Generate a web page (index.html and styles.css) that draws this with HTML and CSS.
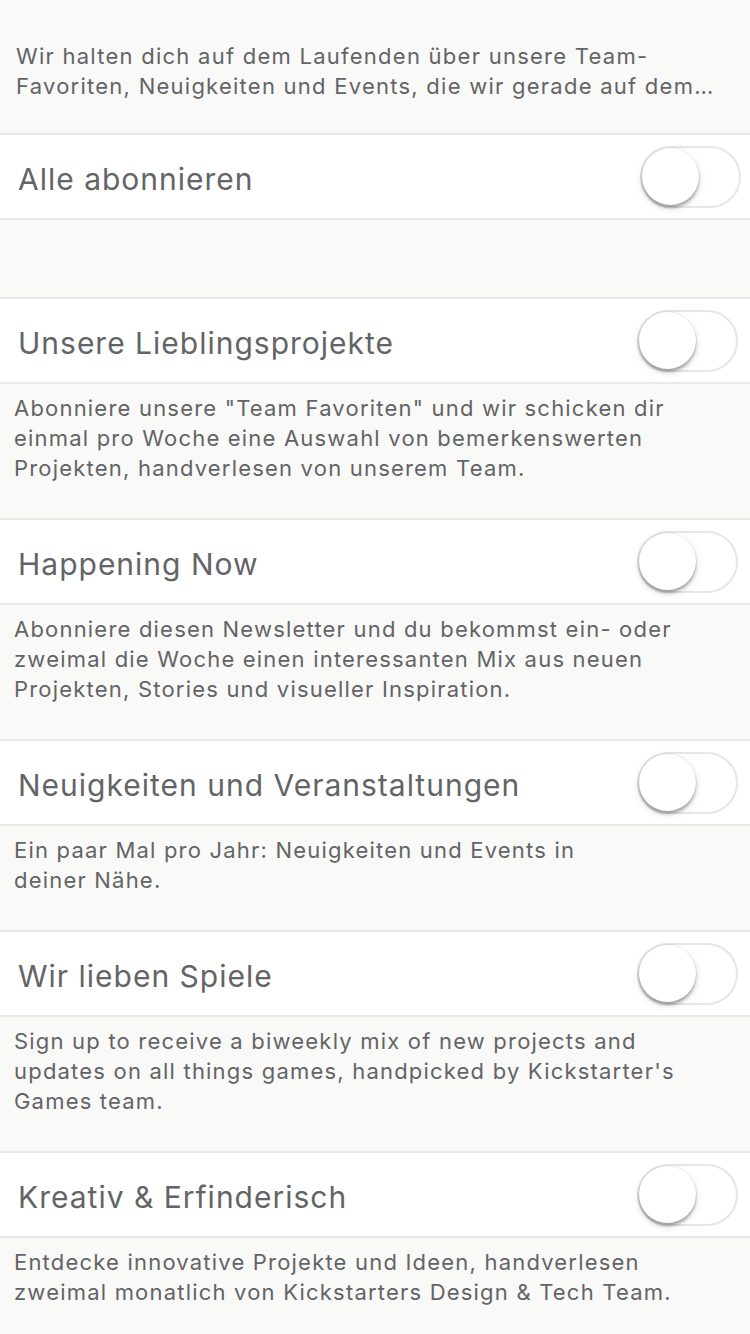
FILE: index.html
```html
<!DOCTYPE html>
<html lang="de">
<head>
<meta charset="utf-8">
<link rel="stylesheet" href="styles.css">
</head>
<body>
<div class="page">
  <p class="intro">Wir halten dich auf dem Laufenden über unsere Team-<br>Favoriten, Neuigkeiten und Events, die wir gerade auf dem…</p>

  <div class="row row--all">
    <span class="row-title">Alle abonnieren</span>
    <span class="toggle"><span class="knob"></span></span>
  </div>

  <div class="spacer"></div>

  <section class="group">
    <div class="row">
      <span class="row-title">Unsere Lieblingsprojekte</span>
      <span class="toggle"><span class="knob"></span></span>
    </div>
    <p class="desc">Abonniere unsere "Team Favoriten" und wir schicken dir<br>einmal pro Woche eine Auswahl von bemerkenswerten<br>Projekten, handverlesen von unserem Team.</p>
  </section>

  <section class="group">
    <div class="row">
      <span class="row-title">Happening Now</span>
      <span class="toggle"><span class="knob"></span></span>
    </div>
    <p class="desc">Abonniere diesen Newsletter und du bekommst ein- oder<br>zweimal die Woche einen interessanten Mix aus neuen<br>Projekten, Stories und visueller Inspiration.</p>
  </section>

  <section class="group">
    <div class="row">
      <span class="row-title">Neuigkeiten und Veranstaltungen</span>
      <span class="toggle"><span class="knob"></span></span>
    </div>
    <p class="desc">Ein paar Mal pro Jahr: Neuigkeiten und Events in<br>deiner Nähe.</p>
  </section>

  <section class="group">
    <div class="row">
      <span class="row-title">Wir lieben Spiele</span>
      <span class="toggle"><span class="knob"></span></span>
    </div>
    <p class="desc">Sign up to receive a biweekly mix of new projects and<br>updates on all things games, handpicked by Kickstarter's<br>Games team.</p>
  </section>

  <section class="group">
    <div class="row">
      <span class="row-title">Kreativ &amp; Erfinderisch</span>
      <span class="toggle"><span class="knob"></span></span>
    </div>
    <p class="desc">Entdecke innovative Projekte und Ideen, handverlesen<br>zweimal monatlich von Kickstarters Design &amp; Tech Team.</p>
  </section>
</div>
</body>
</html>
```

FILE: styles.css
```css
* { box-sizing: border-box; }
html, body {
  margin: 0;
  padding: 0;
  background: #f9f9f8;
}
body {
  font-family: Inter, Roboto, "Liberation Sans", sans-serif;
  color: #636466;
  width: 750px;
  height: 1334px;
  overflow: hidden;
}
.page {
  display: flex;
  flex-direction: column;
}
.intro {
  margin: 0;
  padding: 41px 16px 32px;
  font-size: 22px;
  line-height: 30px;
  letter-spacing: 1.25px;
  white-space: nowrap;
}
.row {
  display: flex;
  align-items: center;
  justify-content: space-between;
  height: 87px;
  background: #fff;
  border-top: 2px solid #e9e9e9;
  border-bottom: 2px solid #e9e9e9;
  padding: 0 12px 0 18px;
}
.row--all { padding-right: 9px; }
.row-title {
  font-size: 30px;
  line-height: 36px;
  letter-spacing: 1px;
  padding-top: 4px;
}
.spacer { height: 77px; }
.desc {
  margin: 0;
  padding: 9px 14px 35px;
  font-size: 22px;
  line-height: 30px;
  letter-spacing: 1.2px;
  white-space: nowrap;
}
.toggle {
  position: relative;
  width: 101px;
  height: 62px;
  border: 2px solid #e6e6e6;
  border-radius: 31px;
  background: #fff;
  flex: none;
}
.knob {
  position: absolute;
  left: 0;
  top: 0;
  width: 57px;
  height: 57px;
  border-radius: 50%;
  background: #fff;
  box-shadow: 0 3px 3px rgba(0,0,0,0.28), 0 3px 9px rgba(0,0,0,0.12), 0 0 0 0.5px rgba(0,0,0,0.08);
}
```
